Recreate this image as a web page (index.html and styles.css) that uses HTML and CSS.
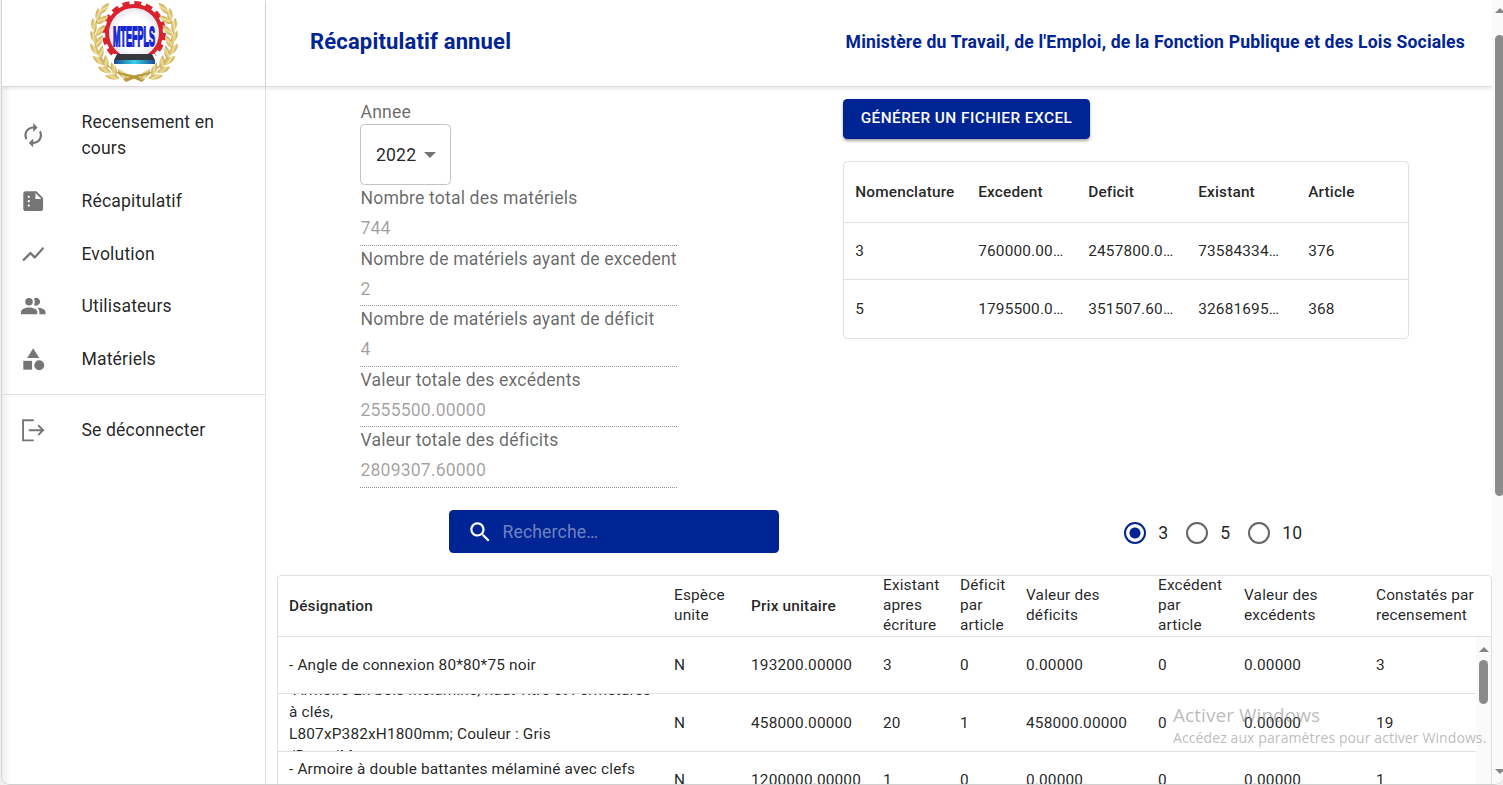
FILE: index.html
```html
<!DOCTYPE html>
<html lang="fr">
<head>
<meta charset="utf-8">
<title>Récapitulatif annuel</title>
<link rel="stylesheet" href="styles.css">
</head>
<body>
<div class="window">
  <aside class="sidebar">
    <div class="brand">
      <svg class="logo" viewBox="0 0 110 86" width="110" height="86">
        <defs>
          <radialGradient id="disc"><stop offset="0.6" stop-color="#fff"/><stop offset="1" stop-color="#e4e2ec"/></radialGradient>
          <linearGradient id="gold" x1="0" y1="0" x2="1" y2="1"><stop offset="0" stop-color="#a98523"/><stop offset="0.5" stop-color="#f0df98"/><stop offset="1" stop-color="#b08d2d"/></linearGradient>
          <linearGradient id="keys" x1="0" x2="1"><stop offset="0" stop-color="#174a94"/><stop offset="0.5" stop-color="#38d3ec"/><stop offset="1" stop-color="#174a94"/></linearGradient>
          <path id="leaf" d="M0 7C-4 2-3-4 0-8 3-4 4 2 0 7Z" fill="url(#gold)"/>
          <g id="branch">
            <path d="M25 8C8 25 8 62 47 77" fill="none" stroke="#b9983c" stroke-width="1.200"/>
            <use href="#leaf" transform="translate(24 9) rotate(42)"/>
            <use href="#leaf" transform="translate(18 16) rotate(2)"/>
            <use href="#leaf" transform="translate(22 20) rotate(55)"/>
            <use href="#leaf" transform="translate(14 26) rotate(-10)"/>
            <use href="#leaf" transform="translate(20 31) rotate(42)"/>
            <use href="#leaf" transform="translate(14 38) rotate(-25)"/>
            <use href="#leaf" transform="translate(19 42) rotate(28)"/>
            <use href="#leaf" transform="translate(15 50) rotate(-38)"/>
            <use href="#leaf" transform="translate(21 53) rotate(12)"/>
            <use href="#leaf" transform="translate(19 61) rotate(-52)"/>
            <use href="#leaf" transform="translate(26 63) rotate(-3)"/>
            <use href="#leaf" transform="translate(25 70) rotate(-66)"/>
            <use href="#leaf" transform="translate(34 70) rotate(-20)"/>
            <use href="#leaf" transform="translate(33 77) rotate(-80)"/>
            <use href="#leaf" transform="translate(43 75) rotate(-42)"/>
            <path d="M38 72Q51 74 65 79L62 82Q49 76 38 74Z" fill="#b9983c"/>
          </g>
        </defs>
        <circle cx="54" cy="33" r="30" fill="none" stroke="#d9222e" stroke-width="4" stroke-dasharray="7 4.780"/>
        <circle cx="54" cy="33" r="27" fill="url(#disc)" stroke="#d9222e" stroke-width="4"/>
        <path d="M33 54H75L81 70H27Z" fill="#fff"/>
        <use href="#branch"/>
        <use href="#branch" transform="translate(108 0) scale(-1 1)"/>
        <g transform="translate(33 46) scale(1 1.950)"><text class="logo-text" x="0" y="0" textLength="42" lengthAdjust="spacingAndGlyphs">MTEFPLS</text></g>
        <path d="M37 54H72L75 60H34Z" fill="#34383d"/>
        <path d="M34 60H75V64H34Z" fill="url(#keys)"/>
      </svg>
    </div>
    <nav class="menu">
      <a class="item"><svg class="icon" viewBox="0 0 24 24"><path d="M12 6v3l4-4-4-4v3c-4.42 0-8 3.58-8 8 0 1.57.46 3.03 1.24 4.26L6.7 14.8c-.45-.83-.7-1.79-.7-2.8 0-3.31 2.69-6 6-6zm6.76 1.74L17.3 9.2c.44.84.7 1.79.7 2.8 0 3.31-2.69 6-6 6v-3l-4 4 4 4v-3c4.42 0 8-3.58 8-8 0-1.57-.46-3.03-1.24-4.26z"/></svg><span>Recensement en cours</span></a>
      <a class="item"><svg class="icon" viewBox="0 0 24 24"><path d="M15 3H5c-1.1 0-1.99.9-1.99 2L3 19c0 1.1.89 2 1.99 2H19c1.1 0 2-.9 2-2V9l-6-6zM8 17c-.55 0-1-.45-1-1s.45-1 1-1 1 .45 1 1-.45 1-1 1zm0-4c-.55 0-1-.45-1-1s.45-1 1-1 1 .45 1 1-.45 1-1 1zm0-4c-.55 0-1-.45-1-1s.45-1 1-1 1 .45 1 1-.45 1-1 1zm6 1V4.500l5.500 5.500H14z"/></svg><span>Récapitulatif</span></a>
      <a class="item"><svg class="icon" viewBox="0 0 24 24"><path d="m3.500 18.490 6-6.010 4 4L22 6.920l-1.410-1.410-7.090 7.970-4-4L2 16.990z"/></svg><span>Evolution</span></a>
      <a class="item"><svg class="icon people" viewBox="0 0 24 24"><circle cx="8.200" cy="8" r="3.400"/><path d="M12.600 5.400a3.400 3.400 0 1 1 0 5.200 4.600 4.600 0 0 0 0-5.200z"/><path d="M.9 19.300v-2c0-2.400 4-4 7.300-4s7.500 1.600 7.500 4v2z"/><path d="M16 13.400c3.600 0 7.200 1.600 7.200 4v1.900h-5.600v-2c0-1.700-.8-3-1.600-3.900z"/></svg><span>Utilisateurs</span></a>
      <a class="item"><svg class="icon" viewBox="0 0 24 24"><path d="m12 2-5.500 9h11z"/><circle cx="17.500" cy="17.500" r="4.500"/><path d="M3 13.500h8v8H3z"/></svg><span>Matériels</span></a>
    </nav>
    <nav class="menu menu-end">
      <a class="item"><svg class="icon" viewBox="0 0 24 24"><path d="M12.500 3H2.800v18.200h9.700M8 12h13M16.500 7.500 21 12l-4.500 4.500" fill="none" stroke="currentColor" stroke-width="1.700"/></svg><span>Se déconnecter</span></a>
    </nav>
  </aside>

  <main class="main">
    <header class="topbar">
      <h1 class="title">Récapitulatif annuel</h1>
      <p class="ministry">Ministère du Travail, de l'Emploi, de la Fonction Publique et des Lois Sociales</p>
    </header>

    <section class="summary">
      <div class="fields">
        <div class="label">Annee</div>
        <div class="select"><span>2022</span><i class="caret"></i></div>
        <div class="label">Nombre total des matériels</div><div class="value">744</div>
        <div class="label">Nombre de matériels ayant de excedent</div><div class="value">2</div>
        <div class="label">Nombre de matériels ayant de déficit</div><div class="value">4</div>
        <div class="label">Valeur totale des excédents</div><div class="value">2555500.00000</div>
        <div class="label">Valeur totale des déficits</div><div class="value">2809307.60000</div>
      </div>
      <div class="totals">
        <button class="export">GÉNÉRER UN FICHIER EXCEL</button>
        <div class="grid small">
          <div class="row head"><b>Nomenclature</b><b>Excedent</b><b>Deficit</b><b>Existant</b><b>Article</b></div>
          <div class="row first"><span>3</span><span>760000.00…</span><span>2457800.0…</span><span>73584334…</span><span>376</span></div>
          <div class="row last"><span>5</span><span>1795500.0…</span><span>351507.60…</span><span>32681695…</span><span>368</span></div>
        </div>
      </div>
    </section>

    <section class="tools">
      <div class="search">
        <svg class="search-icon" viewBox="0 0 24 24"><path d="M15.500 14h-.79l-.28-.27C15.410 12.590 16 11.110 16 9.500 16 5.910 13.090 3 9.500 3S3 5.910 3 9.500 5.910 16 9.500 16c1.610 0 3.090-.59 4.230-1.570l.27.28v.79l5 4.990L20.490 19l-4.990-5zm-6 0C7.010 14 5 11.990 5 9.500S7.010 5 9.500 5 14 7.010 14 9.500 11.990 14 9.500 14z"/></svg>
        <span>Recherche…</span>
      </div>
      <div class="radios">
        <label class="choice"><i class="dot on"></i>3</label>
        <label class="choice"><i class="dot"></i>5</label>
        <label class="choice"><i class="dot"></i>10</label>
      </div>
    </section>

    <section class="grid large">
      <div class="row head">
        <b>Désignation</b><span>Espèce unite</span><b>Prix unitaire</b><span>Existant apres écriture</span><span>Déficit par article</span><span>Valeur des déficits</span><span>Excédent par article</span><span>Valeur des excédents</span><span>Constatés par recensement</span>
      </div>
      <div class="body">
        <div class="rows">
          <div class="row first"><span>- Angle de connexion 80*80*75 noir</span><span>N</span><span>193200.00000</span><span>3</span><span>0</span><span>0.00000</span><span>0</span><span>0.00000</span><span>3</span></div>
          <div class="row tall"><span>-Armoire En bois mélaminé, haut vitré et Fermetures<br>à clés,<br>L807xP382xH1800mm; Couleur : Gris<br>/Retro/M</span><span>N</span><span>458000.00000</span><span>20</span><span>1</span><span>458000.00000</span><span>0</span><span>0.00000</span><span>19</span></div>
          <div class="row"><span>- Armoire à double battantes mélaminé avec clefs<br>&nbsp;</span><span>N</span><span>1200000.00000</span><span>1</span><span>0</span><span>0.00000</span><span>0</span><span>0.00000</span><span>1</span></div>
        </div>
        <div class="inner-scroll"><i class="arrow-up"></i><i class="inner-thumb"></i></div>
      </div>
    </section>
  </main>

  <div class="page-scroll"><i class="arrow-up"></i><i class="page-thumb"></i><i class="arrow-down"></i></div>
</div>
<div class="watermark"><div class="wm-title">Activer Windows</div><div class="wm-text">Accédez aux paramètres pour activer Windows.</div></div>
</body>
</html>
```

FILE: styles.css
```css
* { box-sizing: border-box; }
body {
  margin: 0;
  width: 1503px;
  height: 785px;
  overflow: hidden;
  background: #f0f0f0;
  font: 400 17.6px/26.4px Roboto, sans-serif;
  letter-spacing: 0.165px;
  color: rgba(0, 0, 0, 0.87);
}
.window {
  display: flex;
  height: 785px;
  margin-left: 1px;
  overflow: hidden;
  background: #fff;
  border-left: 1px solid #d4d4d4;
  border-bottom: 1px solid #d0d0d0;
  border-radius: 0 0 9px 9px;
}
.sidebar {
  flex: none;
  width: 264px;
  border-right: 1px solid #e0e0e0;
  background: linear-gradient(90deg, #eee, #fff 9px);
}
.brand {
  height: 86.6px;
  padding-left: 78px;
  border-bottom: 1px solid #d9d9d9;
  background: #fff;
  box-shadow: 0 2px 3px rgba(0, 0, 0, 0.08);
}
.logo { display: block; }
.logo-text { font: bold 14px "Liberation Sans", sans-serif; letter-spacing: 0; fill: #1526cf; stroke: #1526cf; stroke-width: 0.9; }
.menu { padding: 8.8px 0; }
.menu:not(.menu-end) { height: 307.8px; }
.menu-end { border-top: 1px solid #e0e0e0; }
.item {
  display: flex;
  align-items: center;
  padding: 13.2px 17.6px 13.2px 18px;
}
.item span { width: 160px; }
.icon {
  flex: none;
  width: 26.4px;
  height: 26.4px;
  margin-right: 35px;
  color: #757575;
  fill: currentColor;
}
.main { flex: none; width: 1226px; }
.topbar {
  display: flex;
  justify-content: space-between;
  align-items: center;
  height: 86.6px;
  padding: 0 27px 2px 44px;
  border-bottom: 1px solid #dedede;
  box-shadow: 0 2px 3px rgba(0, 0, 0, 0.09);
  color: #002494;
}
.title { margin: 0; font-size: 22px; font-weight: 700; letter-spacing: 0.165px; }
.ministry { margin: 0; font-weight: 700; font-size: 17.6px; letter-spacing: 0.17px; }
.summary {
  display: flex;
  height: 423.4px;
  padding: 12.4px 0 0 94px;
}
.fields { width: 317px; margin-right: 166px; color: rgba(0, 0, 0, 0.6); white-space: nowrap; }
.label { height: 25.5px; line-height: 26.4px; padding: 0.1px 0 0 0.5px; }
.select {
  display: flex;
  align-items: center;
  gap: 8px;
  width: 91px;
  height: 60.8px;
  padding: 1px 0 0 15px;
  border: 1px solid #c4c4c4;
  border-radius: 4.4px;
  color: rgba(0, 0, 0, 0.87);
}
.caret { border: 6px solid transparent; border-top-color: #757575; border-bottom: 0; }
.value {
  height: 35px;
  padding: 4.3px 0 0 0.5px;
  border-bottom: 1px dotted #949494;
  color: rgba(0, 0, 0, 0.38);
}
.totals { width: 566px; }
.export {
  display: block;
  width: 247px;
  height: 40px;
  margin-bottom: 22px;
  padding: 0 0 2px;
  border: 0;
  border-radius: 4.4px;
  background: #002494;
  box-shadow: 0 2px 3px rgba(0, 0, 0, 0.35);
  color: #fff;
  font: 500 15.4px Roboto, sans-serif;
  letter-spacing: 0.44px;
  white-space: nowrap;
}
.grid {
  border: 1px solid #e0e0e0;
  border-radius: 4.4px;
  font-size: 15.4px;
  line-height: 22px;
}
.row {
  display: grid;
  grid-template-rows: 100%;
  align-items: center;
  height: 58px;
  overflow: hidden;
  border-bottom: 1px solid #e0e0e0;
}
.row > * { padding: 0 11px; }
.row.first { height: 57px; }
.row.head { height: 61px; }
.row b { font-weight: 500; }
.small { height: 178px; }
.small .row { grid-template-columns: 123px repeat(4, 110px); padding-top: 1px; }
.small .row > * { padding-left: 11.2px; white-space: nowrap; }
.small .last { border: 0; }
.tools {
  display: flex;
  height: 65px;
  padding-left: 183px;
}
.search {
  display: flex;
  align-items: center;
  width: 330px;
  height: 43px;
  margin-right: 344px;
  padding: 1px 0 0 18px;
  border-radius: 4.4px;
  background: #002494;
  color: rgba(255, 255, 255, 0.44);
}
.search-icon { width: 26.4px; height: 26.4px; margin-right: 9px; fill: #fff; }
.radios { display: flex; height: 47px; }
.choice { display: flex; align-items: center; width: 62px; white-space: nowrap; }
.dot {
  flex: none;
  width: 22px;
  height: 22px;
  margin: 0 12.2px 0 1px;
  border: 2.200px solid #666;
  border-radius: 50%;
}
.dot.on { border-color: #002494; background: radial-gradient(circle, #002494 5px, transparent 6px); }
.large { margin-left: 11px; height: 240px; border-bottom: 0; }
.large .row { grid-template-columns: 385px 77px 132px 77px 66px 132px 86px 132px 1fr; }
.large .head > * { line-height: 20px; }
.large .head > span { padding-bottom: 2px; }
.large .head > :nth-child(4), .large .head > :nth-child(5) { padding-right: 9px; }
.large .head > :nth-child(9) { padding-right: 0; }
.body { display: flex; }
.rows { width: 1198px; }
.rows .row > * { white-space: nowrap; }
.rows .row > :nth-child(3) { padding-right: 0; }
.rows .tall { padding-top: 2px; }
.inner-scroll {
  display: flex;
  flex-direction: column;
  align-items: center;
  width: 15px;
  height: 148px;
  padding-top: 10px;
  background: #fafafa;
}
.arrow-up { border: 5px solid transparent; border-bottom-color: #858585; border-top: 0; }
.arrow-down { border: 5px solid transparent; border-top-color: #858585; border-bottom: 0; }
.inner-thumb { width: 9px; height: 44px; margin-top: 8px; border-radius: 5px; background: #8b8b8b; }
.page-scroll {
  display: flex;
  flex: none;
  flex-direction: column;
  align-items: center;
  width: 15px;
  padding: 8px 0 10px;
  background: #fafafa;
}
.page-thumb { width: 9px; height: 461px; margin: 22px 0 auto; border-radius: 5px; background: #8b8b8b; }
.watermark {
  position: absolute;
  left: 1173px;
  top: 703px;
  font-family: "Open Sans", sans-serif;
  color: rgba(120, 120, 120, 0.5);
  white-space: nowrap;
  pointer-events: none;
}
.wm-title { font-size: 19px; line-height: 24px; letter-spacing: 0.05px; }
.wm-text { font-size: 14px; line-height: 21px; letter-spacing: 0.1px; }
```
